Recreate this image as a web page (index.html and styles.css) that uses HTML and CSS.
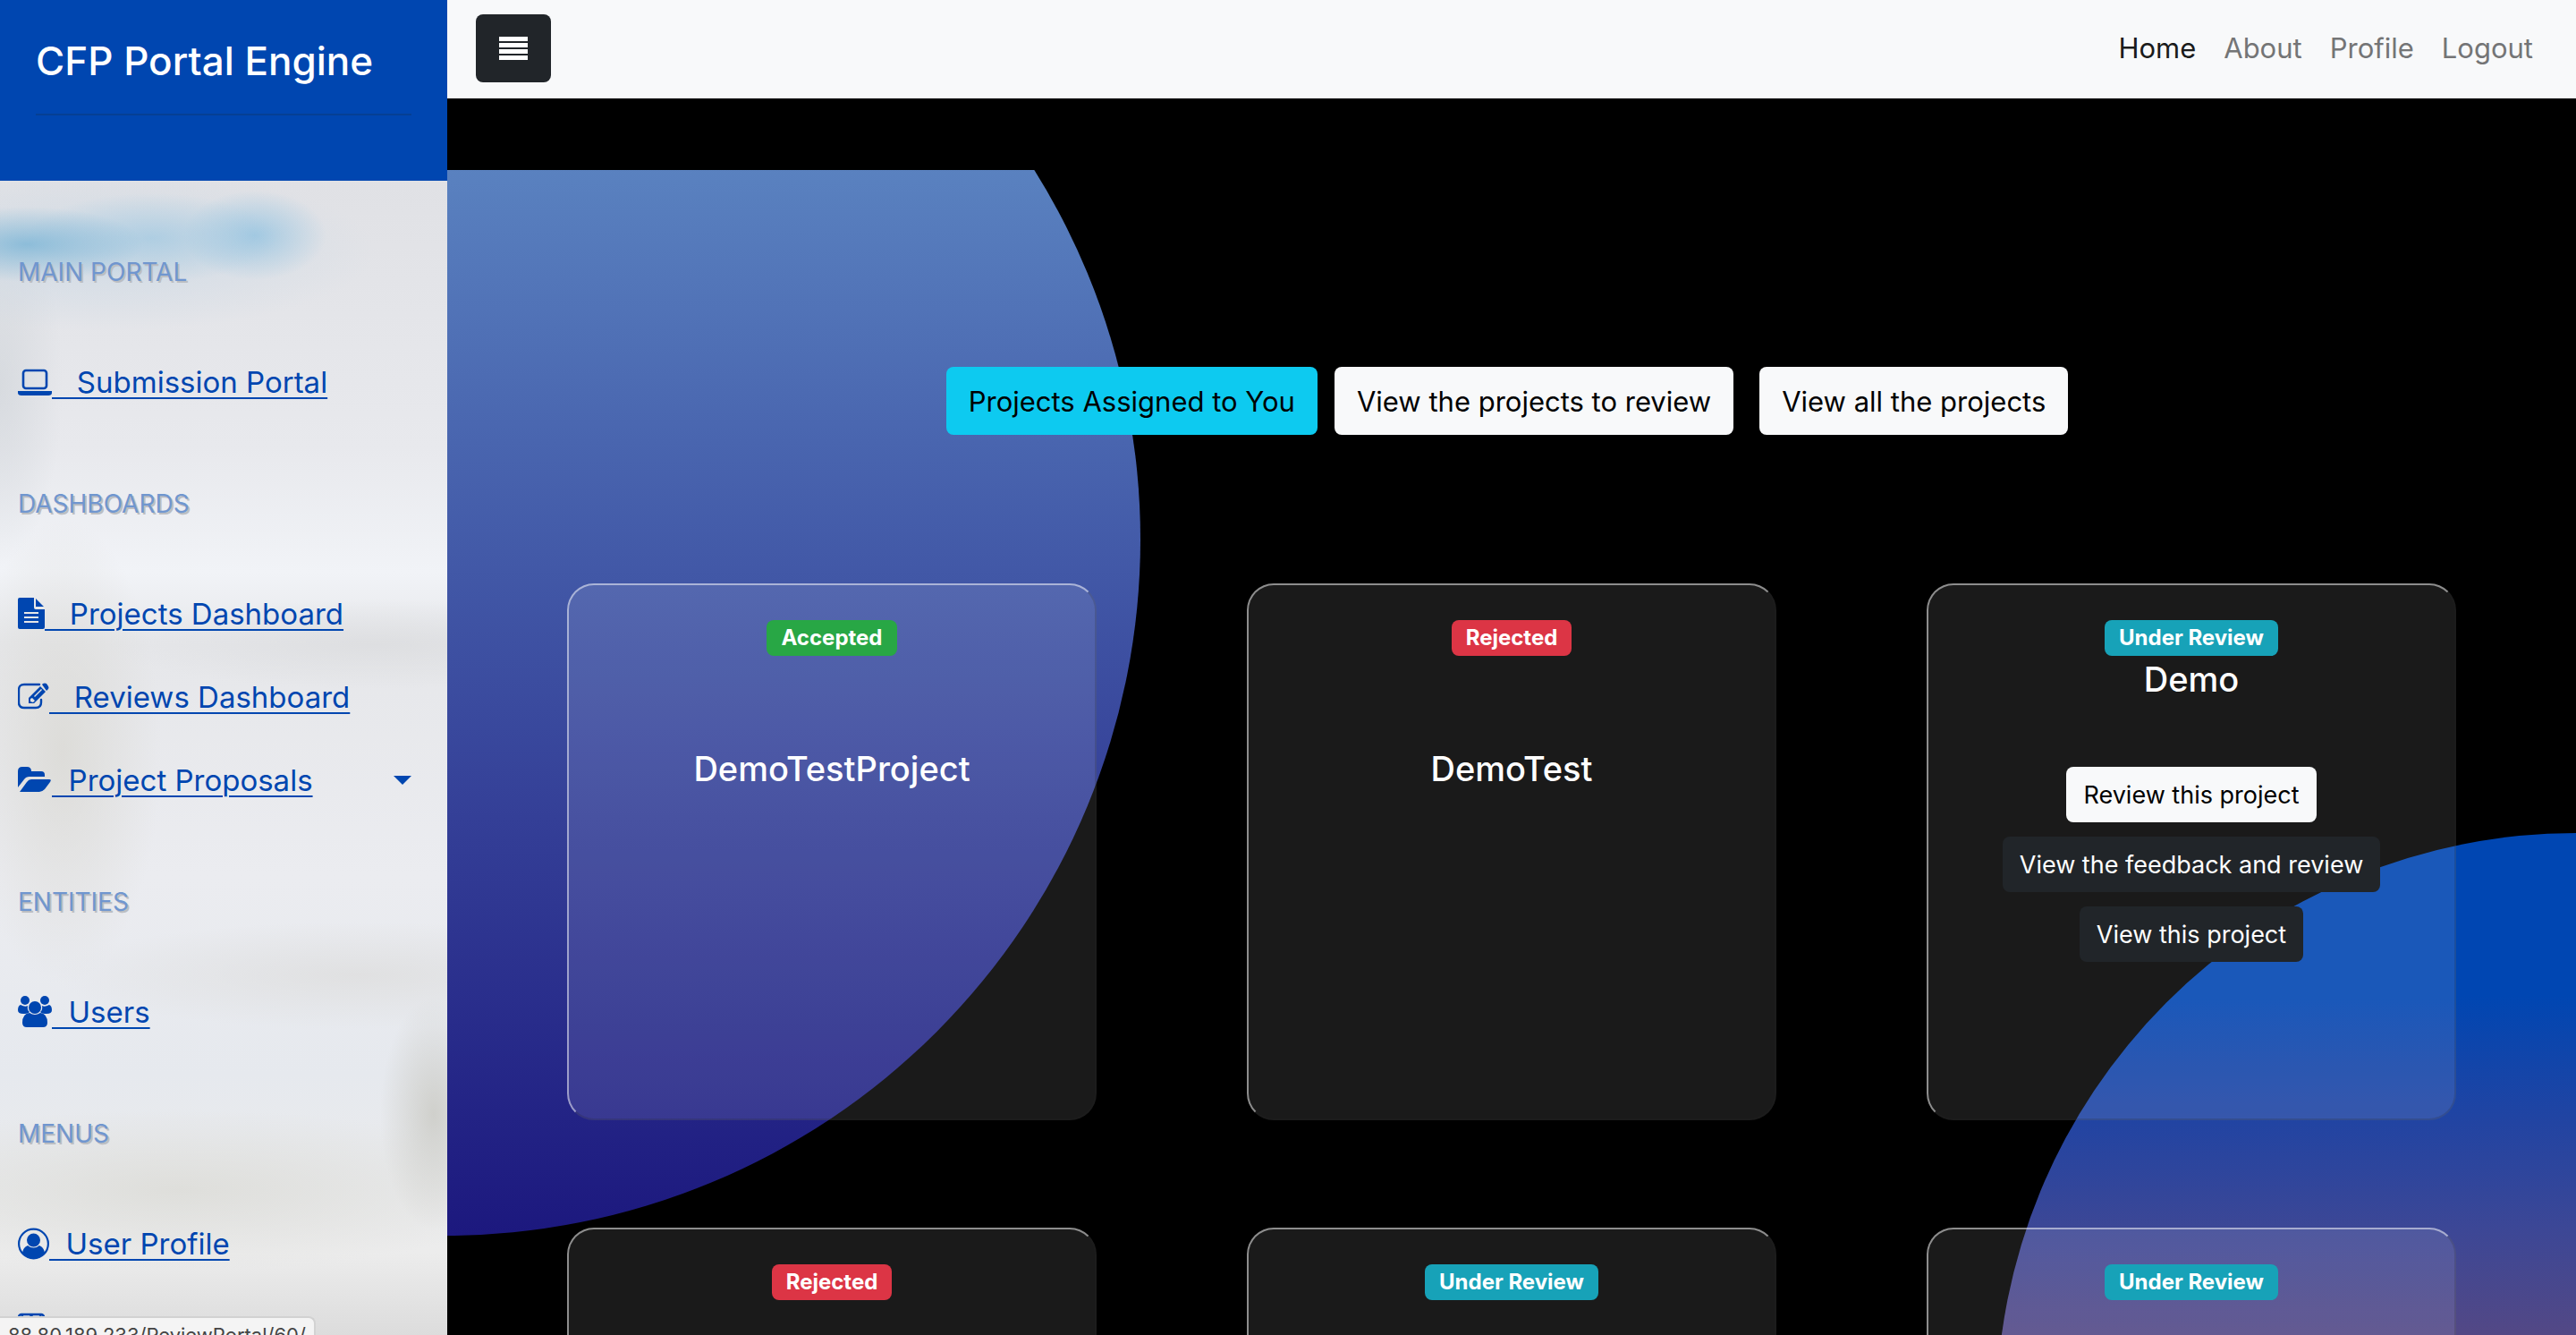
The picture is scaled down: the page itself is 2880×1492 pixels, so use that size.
FILE: index.html
```html
<!DOCTYPE html>
<html lang="en">
<head>
<meta charset="utf-8">
<title>CFP Portal Engine</title>
<meta name="viewport" content="width=device-width, initial-scale=1">
<link rel="stylesheet" href="styles.css">
</head>
<body>
<div class="layout">
  <aside class="sidebar">
    <header class="sidebar-header">
      <h1 class="brand">CFP Portal Engine</h1>
      <hr class="brand-rule">
    </header>
    <nav class="menu" aria-label="Sections">
      <h2 class="menu-heading">MAIN PORTAL</h2>
      <ul class="menu-list">
        <li><a class="menu-link" href="#"><svg class="icon" width="38" height="36" viewBox="0 0 38 36" aria-hidden="true"><rect x="6" y="5" width="26" height="20" rx="3" fill="none" stroke="currentColor" stroke-width="2.6"/><path d="M0 28h38v2q0 3-4 3H4q-4 0-4-3z" fill="currentColor"/></svg><span>&nbsp;&nbsp; Submission Portal</span></a></li>
      </ul>
      <h2 class="menu-heading">DASHBOARDS</h2>
      <ul class="menu-list">
        <li><a class="menu-link" href="#"><svg class="icon" width="30" height="36" viewBox="0 0 30 36" aria-hidden="true"><path fill="currentColor" fill-rule="evenodd" d="M2 0h16v11q0 2 2 2h10v20q0 2-2 2H2q-2 0-2-2V2q0-2 2-2zM20 1l9 9h-9zM7 16v2h16v-2zM7 21v2h16v-2zM7 26v2h16v-2z"/></svg><span>&nbsp;&nbsp; Projects Dashboard</span></a></li>
        <li><a class="menu-link" href="#"><svg class="icon" width="35" height="36" viewBox="0 0 35 36" aria-hidden="true"><path d="M24 4H7Q1 4 1 10v14q0 6 6 6h13q6 0 6-6v-3" fill="none" stroke="currentColor" stroke-width="2.4" stroke-linecap="round"/><path fill="currentColor" fill-rule="evenodd" d="M12 19L25 6l6 6-13 13h-6zM14 20v3l3 1 2-2-3-3zM18 17l8-8 1 1-8 8zM27 4l1-1q2-1 4 0l2 3q1 2 0 3l-2 2z"/></svg><span>&nbsp;&nbsp; Reviews Dashboard</span></a></li>
        <li><a class="menu-link" href="#"><svg class="icon" width="38" height="36" viewBox="0 0 38 36" aria-hidden="true"><path fill="currentColor" d="M0 26V8q0-5 5-5h5q5 0 5 5h11q4 0 4 4v2H13q-4 0-6 3zM2 31l8-11q2-3 5-3h20q3 0 1 3l-6 8q-3 3-6 3z"/></svg><span>&nbsp; Project Proposals</span><svg class="caret" width="20" height="10" viewBox="0 0 20 10" aria-hidden="true"><path d="M0 0h20L10 10z" fill="currentColor"/></svg></a></li>
      </ul>
      <h2 class="menu-heading">ENTITIES</h2>
      <ul class="menu-list">
        <li><a class="menu-link" href="#"><svg class="icon" width="38" height="36" viewBox="0 0 38 36" aria-hidden="true"><g fill="currentColor"><circle cx="8" cy="5" r="5"/><circle cx="30" cy="5" r="5"/><circle cx="19" cy="13" r="7"/><path d="M3 10q5 3 8 1-1 5 2 7-2 2-7 2-6 0-6-4 0-5 3-6zM35 10q-5 3-8 1 1 5-2 7 2 2 7 2 6 0 6-4 0-5-3-6zM13 19q6 4 12 0 8 1 8 11 0 5-5 5H10q-5 0-5-5 0-10 8-11z"/></g></svg><span>&nbsp; Users</span></a></li>
      </ul>
      <h2 class="menu-heading">MENUS</h2>
      <ul class="menu-list">
        <li><a class="menu-link" href="#"><svg class="icon" width="35" height="36" viewBox="0 0 35 36" aria-hidden="true"><circle cx="17.5" cy="18" r="16.4" fill="none" stroke="currentColor" stroke-width="2.2"/><circle cx="17.5" cy="14" r="7.5" fill="currentColor"/><path fill="currentColor" d="M11 20q6.500 5 13 0 5 2 6 8-5 7-12.500 7T5 28q1-6 6-8z"/></svg><span>&nbsp; User Profile</span></a></li>
        <li><a class="menu-link" href="#"><svg class="icon" width="30" height="36" viewBox="0 0 30 36" aria-hidden="true"><rect x="1" y="4" width="28" height="29" rx="3" fill="none" stroke="currentColor" stroke-width="2.6"/><path d="M4 5l6 6 5-6 5 6 6-6" fill="none" stroke="currentColor" stroke-width="2"/></svg><span>&nbsp; Leave Feedback</span></a></li>
      </ul>
    </nav>
  </aside>

  <div class="content">
    <header class="topbar">
      <button class="toggle" type="button" aria-label="Toggle menu"><svg width="32" height="26" viewBox="0 0 32 26" aria-hidden="true"><path fill="currentColor" d="M0 0h32v5H0zM0 7h32v5H0zM0 14h32v5H0zM0 21h32v5H0z"/></svg></button>
      <nav class="topnav" aria-label="Main">
        <a class="active" href="#">Home</a>
        <a href="#">About</a>
        <a href="#">Profile</a>
        <a href="#">Logout</a>
      </nav>
    </header>
    <main class="stage">
      <div class="circle circle-left"></div>
      <div class="circle circle-right"></div>
      <div class="filters">
        <button class="btn btn-info" type="button">Projects Assigned to You</button>
        <button class="btn btn-light spaced" type="button">View the projects to review</button>
        <button class="btn btn-light" type="button">View all the projects</button>
      </div>
      <section class="cards" aria-label="Projects">
        <article class="card"><span class="badge success">Accepted</span><h3 class="card-title lowered">DemoTestProject</h3></article>
        <article class="card"><span class="badge danger">Rejected</span><h3 class="card-title lowered">DemoTest</h3></article>
        <article class="card"><span class="badge info">Under Review</span><h3 class="card-title">Demo</h3>
          <div class="actions">
            <button class="btn btn-sm btn-light" type="button">Review this project</button>
            <button class="btn btn-sm btn-dark" type="button">View the feedback and review</button>
            <button class="btn btn-sm btn-dark" type="button">View this project</button>
          </div>
        </article>
        <article class="card"><span class="badge danger">Rejected</span></article>
        <article class="card"><span class="badge info">Under Review</span></article>
        <article class="card"><span class="badge info">Under Review</span></article>
      </section>
    </main>
  </div>
</div>
<div class="status">88.80.189.233/ReviewPortal/60/</div>
</body>
</html>
```
FILE: styles.css
```css
* { box-sizing: border-box; }

body {
  margin: 0;
  height: 100vh;
  overflow: hidden;
  font-family: Inter, "Liberation Sans", sans-serif;
  font-size: 32px;
  line-height: 48px;
  background: #000;
}

.layout { display: flex; height: 100vh; }

/* Sidebar */
.sidebar {
  flex: 0 0 500px;
  overflow: hidden;
  color: #0046b0;
  background:
    radial-gradient(ellipse 130px 42px at 30px 273px, rgba(110, 175, 212, .7), transparent),
    radial-gradient(ellipse 140px 50px at 170px 266px, rgba(150, 196, 224, .6), transparent),
    radial-gradient(ellipse 80px 50px at 285px 263px, rgba(140, 192, 224, .7), transparent),
    radial-gradient(ellipse 300px 90px at 120px 280px, rgba(200, 215, 228, .7), transparent),
    radial-gradient(ellipse 70px 200px at 0 430px, rgba(205, 210, 215, .6), transparent),
    radial-gradient(ellipse 60px 130px at 485px 1245px, rgba(205, 205, 200, .9), transparent),
    radial-gradient(ellipse 300px 50px at 420px 720px, rgba(218, 219, 221, .7), transparent),
    radial-gradient(ellipse 110px 260px at 70px 840px, rgba(218, 217, 212, .8), transparent),
    radial-gradient(ellipse 340px 60px at 400px 1090px, rgba(222, 222, 222, .8), transparent),
    radial-gradient(ellipse 400px 90px at 200px 1330px, rgba(221, 221, 217, .9), transparent),
    linear-gradient(#e0e1e5 200px, #e8e9ed 500px, #f1f3f7 640px, #e6e7ea 720px, #ebecf0 980px, #e6e9ee 1200px, #ececec 1400px, #dcdcdc);
}
.sidebar-header { height: 202px; padding: 42px 40px 0; background: #0046b0; }
.brand { margin: 0; font-size: 44px; font-weight: 500; line-height: 52px; color: #fff; white-space: nowrap; }
.brand-rule { height: 2px; margin: 33px 0 0; border: 0; background: #053f94; }
.menu { padding: 12px 20px 0; }
.menu-heading {
  margin: 0;
  padding: 68px 0 54px;
  font-size: 28px;
  font-weight: 400;
  line-height: 44px;
  color: #7096cf;
  text-shadow: 2px 2px #bcbec2;
}
.menu-list { margin: 0; padding: 0; list-style: none; }
.menu-link {
  display: flex;
  align-items: center;
  height: 93px;
  font-size: 33px;
  color: inherit;
  white-space: nowrap;
  text-decoration-thickness: 2px;
  text-underline-offset: 5px;
}
.icon { flex: none; }
.caret { margin: 0 20px 0 auto; }

/* Top bar */
.content { flex: 1; min-width: 0; display: flex; flex-direction: column; }
.topbar {
  display: flex;
  align-items: center;
  justify-content: space-between;
  height: 110px;
  padding: 0 48px 2px 32px;
  background: #f8f9fa;
}
.toggle { display: grid; place-items: center; width: 84px; height: 76px; padding: 0; border: 0; border-radius: 8px; color: #fff; background: #212529; }
.topnav { display: flex; gap: 31px; font-size: 31px; }
.topnav a { color: #747576; text-decoration: none; }
.topnav .active { color: #1a1b1b; }

/* Stage */
.stage { position: relative; flex: 1; overflow: hidden; padding: 300px 134px 0; color: #fff; }
.circle { position: absolute; border-radius: 50%; }
.circle-left {
  top: -285px;
  left: -781px;
  width: 1556px;
  height: 1556px;
  background: linear-gradient(#729ad0, #5a82c0 23%, #4965af 43%, #343f97 70%, #1c187e);
  clip-path: inset(365px 0 0 0);
}
.circle-right {
  top: 821px;
  right: -648px;
  width: 1296px;
  height: 1296px;
  background: linear-gradient(#0046b2 14%, #2244a2 25%, #3c4796 34%, #524886 43%, #a04a50);
}
.filters, .cards { position: relative; }
.filters { display: flex; justify-content: center; gap: 19px; padding-right: 10px; }
.btn {
  height: 76px;
  padding: 0 25px;
  border: 0;
  border-radius: 8px;
  font-family: inherit;
  font-size: 31px;
  white-space: nowrap;
}
.spaced { margin-right: 10px; }
.btn-info { background: #0dcaf0; color: #000; }
.btn-light { background: #f8f9fa; color: #000; }
.btn-dark { background: #212529; color: #fff; }
.btn-sm { height: 62px; padding: 0 19px; font-size: 27px; }

.cards {
  display: grid;
  grid-template-columns: repeat(3, 1fr);
  grid-auto-rows: 600px;
  gap: 120px 168px;
  margin-top: 166px;
}
.card {
  display: flex;
  flex-direction: column;
  align-items: center;
  padding-top: 39px;
  border: 2px solid rgba(40, 40, 40, .2);
  border-top-color: rgba(255, 255, 255, .5);
  border-left-color: rgba(255, 255, 255, .5);
  border-radius: 30px;
  background: rgba(255, 255, 255, .1);
}
.badge { height: 40px; padding: 0 16px; border-radius: 8px; font-size: 24px; font-weight: 700; line-height: 40px; }
.success { background: #28a745; }
.danger { background: #dc3545; }
.info { background: #17a2b8; }
.card-title { margin: 0; font-size: 38px; font-weight: 500; line-height: 52px; }
.lowered { margin-top: 100px; }
.actions { display: flex; flex-direction: column; align-items: center; gap: 16px; margin-top: 72px; }

/* Link address shown at the foot of the window */
.status {
  position: fixed;
  left: 0;
  bottom: 0;
  height: 21px;
  padding: 5px 9px 0;
  overflow: hidden;
  border: 2px solid #d2d2d2;
  border-width: 2px 2px 0 0;
  border-top-right-radius: 8px;
  background: #f4f4f4;
  color: #444;
  font-size: 22px;
  line-height: 28px;
}
```
